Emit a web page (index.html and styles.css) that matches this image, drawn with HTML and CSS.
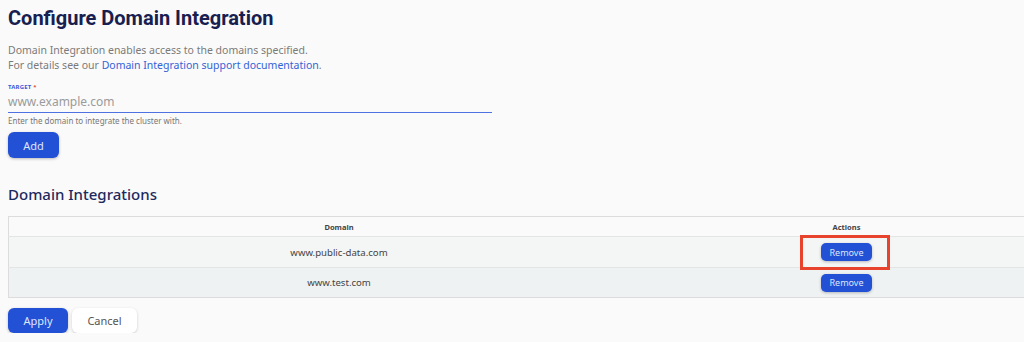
FILE: index.html
```html
<!DOCTYPE html>
<html lang="en">
<head>
  <meta charset="UTF-8" />
  <title>Configure Domain Integration</title>
  <meta name="viewport" content="width=device-width, initial-scale=1.0" />
  <link rel="stylesheet" href="styles.css">
</head>
<body>
  <h1>Configure Domain Integration</h1>
  <p class="intro">
    Domain Integration enables access to the domains specified.<br>
    For details see our <a href="#">Domain Integration support documentation</a>.
  </p>

  <div class="field">
    <label for="target">TARGET <span class="req">*</span></label>
    <input type="text" id="target" placeholder="www.example.com">
    <div class="hint">Enter the domain to integrate the cluster with.</div>
  </div>
  <button type="button" class="btn primary add">Add</button>

  <h2>Domain Integrations</h2>
  <table class="domains">
    <thead>
      <tr>
        <th class="col-domain">Domain</th>
        <th>Actions</th>
      </tr>
    </thead>
    <tbody>
      <tr>
        <td>www.public-data.com</td>
        <td><span class="highlight"><button type="button" class="btn primary small">Remove</button></span></td>
      </tr>
      <tr>
        <td>www.test.com</td>
        <td><button type="button" class="btn primary small">Remove</button></td>
      </tr>
    </tbody>
  </table>

  <div class="actions">
    <button type="button" class="btn primary">Apply</button>
    <button type="button" class="btn secondary">Cancel</button>
  </div>
</body>
</html>
```

FILE: styles.css
```css
body {
  font-family: 'Noto Sans', sans-serif;
  margin: 0;
  padding: 4px 0 0 8px;
  background: #fafafa;
  color: #555;
  overflow: hidden;
}

h1 {
  font-family: Roboto, sans-serif;
  font-size: 20px;
  font-weight: 700;
  color: #17204f;
  margin: 0;
  line-height: 28px;
}

.intro {
  font-size: 10.5px;
  line-height: 15px;
  color: #7a7a7a;
  margin: 11px 0 0;
}

.intro a {
  color: #3363d6;
  text-decoration: none;
}

.field {
  width: 484px;
  margin-top: 10px;
}

.field label {
  display: block;
  font-size: 6px;
  font-weight: 700;
  color: #3a5bd9;
  letter-spacing: 0.2px;
}

.req {
  color: #e0453a;
}

.field input {
  display: block;
  width: 100%;
  box-sizing: border-box;
  border: none;
  border-bottom: 1.5px solid #4f72e3;
  background: transparent;
  font-family: inherit;
  font-size: 12px;
  padding: 2px 0 2px;
  outline: none;
}

.field input::placeholder {
  color: #9b9b9b;
}

.hint {
  font-size: 8px;
  color: #777;
  margin-top: 2px;
}

.btn {
  font-family: inherit;
  border-radius: 6px;
  border: none;
  cursor: pointer;
}

.primary {
  background: #2251d6;
  color: #dfe6fb;
  box-shadow: 0 1px 3px rgba(0, 0, 0, 0.25);
}

.secondary {
  background: #fff;
  color: #555;
  box-shadow: 0 1px 3px rgba(0, 0, 0, 0.18);
}

.add {
  margin-top: 6px;
  width: 51px;
  height: 26px;
  font-size: 11px;
}

h2 {
  font-size: 15px;
  font-weight: 500;
  color: #1e2a5e;
  margin: 25px 0 0;
  line-height: 22px;
}

.domains {
  width: 1016px;
  margin-top: 11px;
  border-collapse: collapse;
  border: 1px solid #dcdcdc;
  border-right: none;
  font-size: 9.6px;
  color: #444;
}

.domains th {
  font-size: 7.5px;
  font-weight: 700;
  color: #444;
  height: 19px;
  padding: 0;
  background: #fafafa;
}

.col-domain {
  width: 660px;
}

.domains td {
  text-align: center;
  border-top: 1px solid #e4e4e4;
  padding: 0;
}

.domains tbody tr:nth-child(1) td {
  height: 30px;
  background: #f4f5f5;
}

.domains tbody tr:nth-child(2) td {
  height: 29px;
  background: #eef2f2;
}

.small {
  display: block;
  margin: 0 auto;
  width: 51px;
  height: 18px;
  font-size: 9px;
  border-radius: 5px;
  padding: 0;
}

.highlight {
  display: block;
  position: relative;
}

.highlight::after {
  content: "";
  position: absolute;
  top: -8px;
  bottom: -9px;
  left: calc(50% - 47px);
  width: 90px;
  box-sizing: border-box;
  border: 3.5px solid #e8432c;
  pointer-events: none;
}

.actions {
  display: flex;
  gap: 4px;
  margin-top: 10px;
}

.actions .btn {
  height: 25px;
  font-size: 11px;
}

.actions .primary {
  width: 60px;
}

.actions .secondary {
  width: 65px;
}
```
